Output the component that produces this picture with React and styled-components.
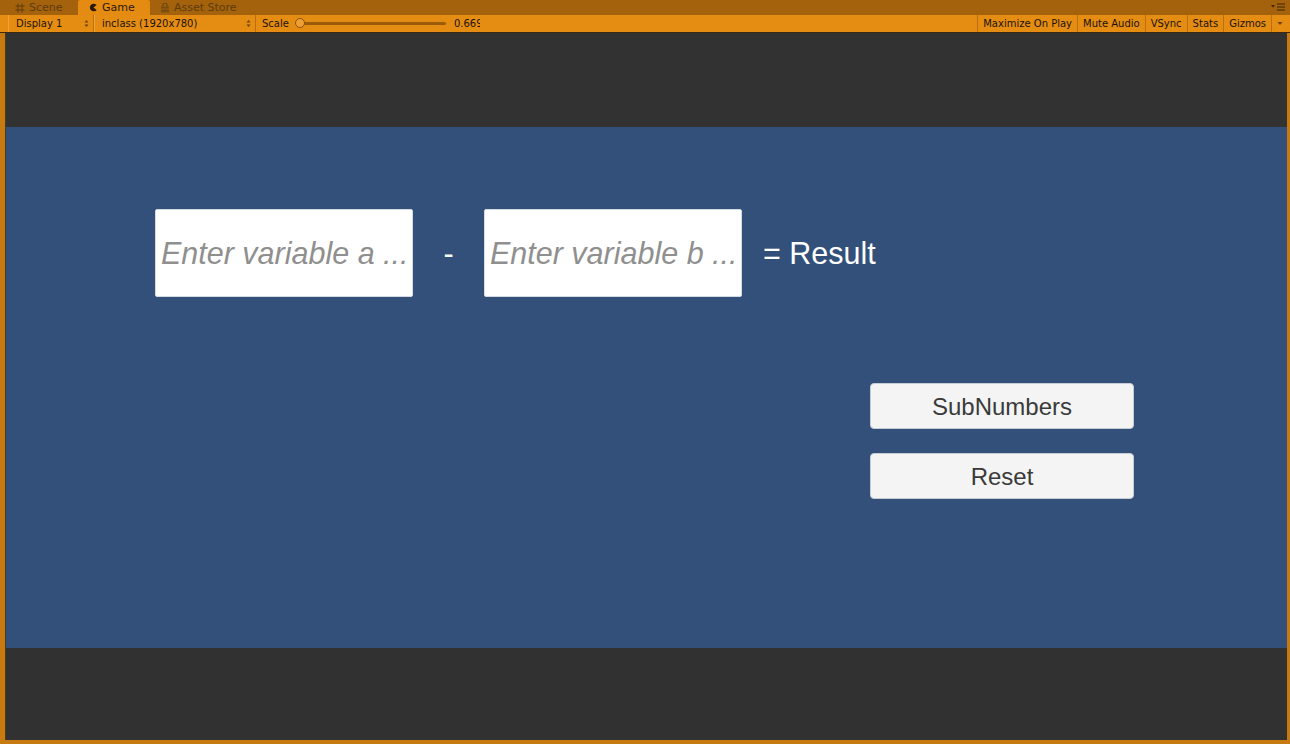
import React from 'react';
import styled, { createGlobalStyle } from 'styled-components';

const GlobalStyle = createGlobalStyle`
  html, body {
    margin: 0;
    padding: 0;
    background: #a4620c;
  }
  #root {
    width: 1290px;
    height: 744px;
  }
`;

const Window = styled.div`
  width: 1290px;
  height: 744px;
  display: flex;
  flex-direction: column;
  background: #c77a0f;
  font-family: 'DejaVu Sans', Verdana, sans-serif;
  overflow: hidden;
`;

const TabBar = styled.div`
  height: 15px;
  flex: none;
  display: flex;
  align-items: stretch;
  background: #a4620c;
  padding-left: 9px;
  position: relative;
`;

const Tab = styled.div`
  width: ${(p) => p.w}px;
  display: flex;
  align-items: center;
  gap: 4px;
  padding-left: ${(p) => p.pl}px;
  box-sizing: border-box;
  background: ${(p) => (p.active ? '#e58b11' : 'transparent')};
  color: ${(p) => (p.active ? '#2a1a05' : '#5e3c0c')};
  font-size: 11px;
  line-height: 15px;
  border-radius: 2px 2px 0 0;
`;

const TabMenu = styled.div`
  position: absolute;
  right: 5px;
  top: 3px;
  display: flex;
`;

const Toolbar = styled.div`
  height: 17px;
  flex: none;
  display: flex;
  align-items: stretch;
  background: #e58d12;
  border-bottom: 1px solid #3a2a12;
  padding: 1px 2px 0 8px;
  box-sizing: content-box;
  margin-top: -1px;
  font-size: 10px;
  color: #1a1104;
`;

const Drop = styled.div`
  width: ${(p) => p.w}px;
  display: flex;
  align-items: center;
  justify-content: space-between;
  padding: 0 4px 0 7px;
  box-sizing: border-box;
  border-right: 1px solid #b86f0c;
  border-left: 1px solid #f2a436;
`;

const ScaleBox = styled.div`
  width: 224px;
  flex: none;
  display: flex;
  align-items: center;
  padding-left: 6px;
  box-sizing: border-box;
  overflow: hidden;
  white-space: nowrap;
`;

const Track = styled.div`
  width: 146px;
  flex: none;
  height: 3px;
  margin: 0 8px 0 11px;
  background: #9a5c0a;
  border-radius: 2px;
  position: relative;
`;

const Thumb = styled.div`
  position: absolute;
  left: -5px;
  top: -4px;
  width: 10px;
  height: 10px;
  border-radius: 50%;
  background: #f0a030;
  border: 1px solid #8a520a;
  box-sizing: border-box;
`;

const Spacer = styled.div`
  flex: 1;
`;

const ToolButton = styled.div`
  display: flex;
  align-items: center;
  padding: 0 ${(p) => p.pad || 5}px;
  border-left: 1px solid #b86f0c;
  white-space: nowrap;
`;

const GameView = styled.div`
  flex: 1;
  display: flex;
  flex-direction: column;
  margin: 0 3px 4px 5px;
  background: #313131;
  border-left: 1px solid #4a3a20;
`;

const Letterbox = styled.div`
  height: ${(p) => p.h}px;
  flex: none;
  background: #323232;
`;

const Canvas = styled.div`
  height: 521px;
  flex: none;
  background: #32507a;
  display: flex;
  flex-direction: column;
  padding: 82px 0 0 149px;
  box-sizing: border-box;
  font-family: 'Liberation Sans', Arial, sans-serif;
`;

const EquationRow = styled.div`
  display: flex;
  align-items: center;
`;

const Field = styled.input`
  width: 258px;
  height: 88px;
  box-sizing: border-box;
  border: 1px solid #d6dbe2;
  border-radius: 2px;
  background: #ffffff;
  padding: 0 5px;
  font-family: 'Liberation Sans', Arial, sans-serif;
  font-size: 30.5px;
  font-style: italic;
  color: #333;
  outline: none;
  &::placeholder {
    color: #8f8f8f;
  }
`;

const Operator = styled.span`
  width: 71px;
  text-align: center;
  color: #ffffff;
  font-size: 30.5px;
`;

const ResultText = styled.span`
  margin-left: 21px;
  color: #ffffff;
  font-size: 30.5px;
`;

const ButtonColumn = styled.div`
  margin: 86px 0 0 715px;
  display: flex;
  flex-direction: column;
  gap: 24px;
`;

const Button = styled.button`
  width: 264px;
  height: 46px;
  border: 1px solid #c8cdd4;
  border-radius: 4px;
  background: #f4f4f4;
  color: #3a3a3a;
  font-family: 'Liberation Sans', Arial, sans-serif;
  font-size: 24px;
  padding: 2px 0 0;
  cursor: pointer;
`;

const SceneIcon = () => (
  <svg width="10" height="10" viewBox="0 0 10 10">
    <path d="M3 0.5v9M7 0.5v9M0.5 3h9M0.5 7h9" stroke="#5e3c0c" strokeWidth="1" fill="none" />
  </svg>
);

const GameIcon = () => (
  <svg width="9" height="9" viewBox="0 0 10 10">
    <path d="M8.5 2.2A4.3 4.3 0 1 0 8.5 7.8L5 5Z" fill="#2a1a05" />
  </svg>
);

const StoreIcon = () => (
  <svg width="10" height="10" viewBox="0 0 10 10">
    <path d="M3 3.5V2a2 2 0 0 1 4 0v1.5" stroke="#5e3c0c" strokeWidth="1" fill="none" />
    <rect x="1" y="3.5" width="8" height="6" fill="#7a4e10" />
    <path d="M1 6h8" stroke="#a4620c" strokeWidth="0.8" />
  </svg>
);

const MenuIcon = () => (
  <svg width="14" height="8" viewBox="0 0 14 8">
    <path d="M0 2h4L2 4.5Z" fill="#3a2406" />
    <path d="M6 1h8M6 4h8M6 7h8" stroke="#3a2406" strokeWidth="1.2" />
  </svg>
);

const UpDown = () => (
  <svg width="5" height="9" viewBox="0 0 5 9">
    <path d="M0.5 3.5L2.5 1L4.5 3.5ZM0.5 5.5L2.5 8L4.5 5.5Z" fill="#6a4408" />
  </svg>
);

const DownArrow = () => (
  <svg width="6" height="5" viewBox="0 0 6 5">
    <path d="M0.5 1L3 4L5.5 1Z" fill="#6a4408" />
  </svg>
);

export default function App() {
  return (
    <>
      <GlobalStyle />
      <Window>
        <TabBar>
          <Tab w={69} pl={6}>
            <SceneIcon />
            Scene
          </Tab>
          <Tab w={72} pl={11} active>
            <GameIcon />
            Game
          </Tab>
          <Tab w={100} pl={10}>
            <StoreIcon />
            Asset Store
          </Tab>
          <TabMenu>
            <MenuIcon />
          </TabMenu>
        </TabBar>
        <Toolbar>
          <Drop w={86}>
            Display 1
            <UpDown />
          </Drop>
          <Drop w={162}>
            inclass (1920x780)
            <UpDown />
          </Drop>
          <ScaleBox>
            Scale
            <Track>
              <Thumb />
            </Track>
            0.669
          </ScaleBox>
          <Spacer />
          <ToolButton>Maximize On Play</ToolButton>
          <ToolButton>Mute Audio</ToolButton>
          <ToolButton>VSync</ToolButton>
          <ToolButton>Stats</ToolButton>
          <ToolButton>Gizmos</ToolButton>
          <ToolButton pad={5}>
            <DownArrow />
          </ToolButton>
        </Toolbar>
        <GameView>
          <Letterbox h={94} />
          <Canvas>
            <EquationRow>
              <Field placeholder="Enter variable a ..." />
              <Operator>-</Operator>
              <Field placeholder="Enter variable b ..." />
              <ResultText>= Result</ResultText>
            </EquationRow>
            <ButtonColumn>
              <Button>SubNumbers</Button>
              <Button>Reset</Button>
            </ButtonColumn>
          </Canvas>
          <Spacer />
        </GameView>
      </Window>
    </>
  );
}
